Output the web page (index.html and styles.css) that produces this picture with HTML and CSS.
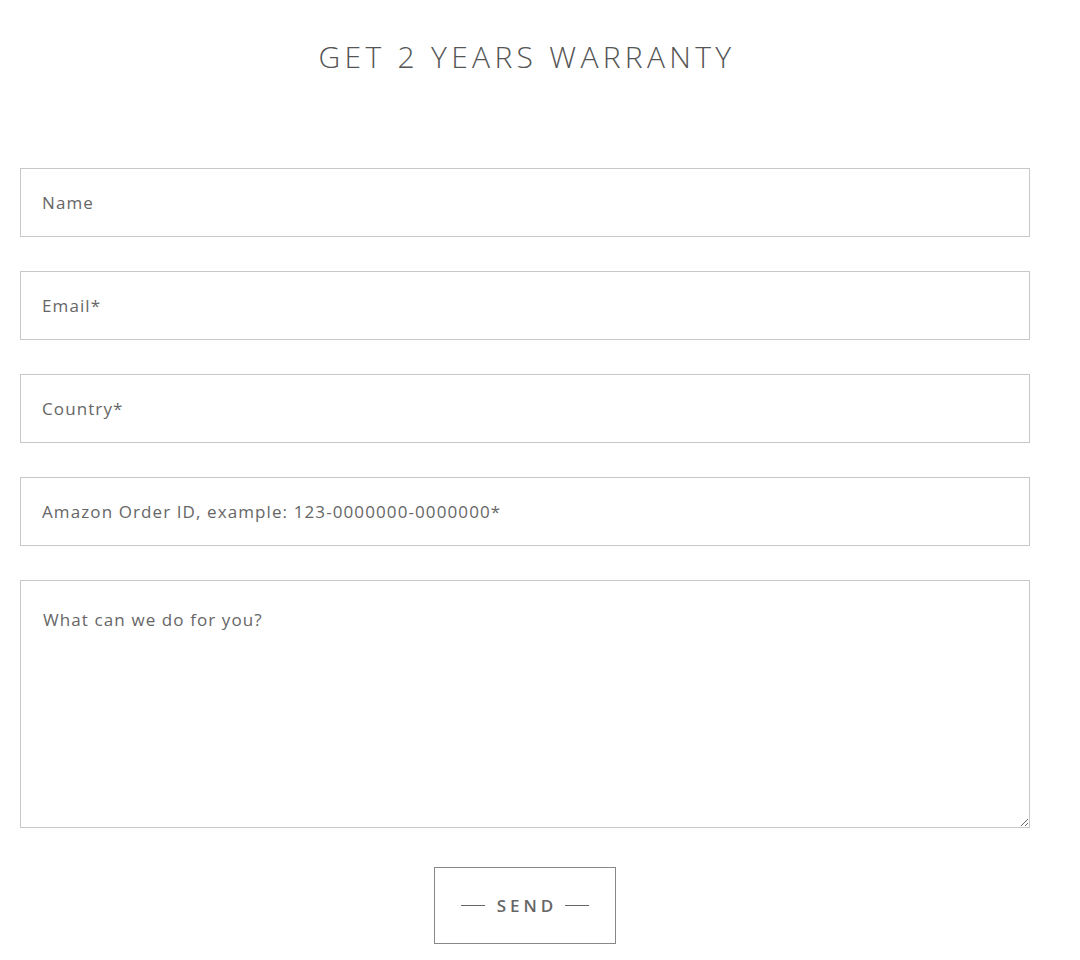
FILE: index.html
```html
<!DOCTYPE html>
<html lang="en">
<head>
<meta charset="utf-8">
<title>Get 2 Years Warranty</title>
<link rel="stylesheet" href="styles.css">
</head>
<body>
<main class="page">
  <h1 class="title">GET 2 YEARS WARRANTY</h1>
  <form class="form">
    <input class="field" type="text" placeholder="Name">
    <input class="field" type="email" placeholder="Email*">
    <input class="field" type="text" placeholder="Country*">
    <input class="field" type="text" placeholder="Amazon Order ID, example: 123-0000000-0000000*">
    <textarea class="field area" placeholder="What can we do for you?"></textarea>
    <div class="actions">
      <button class="send" type="button"><span class="dash"></span><span class="label">SEND</span><span class="dash"></span></button>
    </div>
  </form>
</main>
</body>
</html>
```
FILE: styles.css
```css
html, body {
  margin: 0;
  padding: 0;
  background: #fff;
}
body {
  font-family: "Open Sans", "Noto Sans", sans-serif;
  color: #555;
}
.page {
  width: 1010px;
  margin-left: 20px;
  padding-top: 40px;
}
.title {
  margin: 0 0 0 4px;
  text-align: center;
  font-family: "Open Sans", "Noto Sans", sans-serif;
  font-weight: 300;
  font-size: 30px;
  line-height: 34px;
  letter-spacing: 4.3px;
  color: #555;
}
.form {
  display: flex;
  flex-direction: column;
  gap: 34px;
  margin-top: 94px;
}
.field {
  box-sizing: border-box;
  width: 100%;
  height: 69px;
  margin: 0;
  border: 1px solid #c8c8c8;
  border-radius: 0;
  padding: 0 21px;
  font-family: "Open Sans", "Noto Sans", sans-serif;
  font-size: 17px;
  letter-spacing: 1.1px;
  color: #555;
  background: #fff;
  outline: none;
}
.field::placeholder {
  color: #666;
  opacity: 1;
}
.area {
  height: 248px;
  padding: 27px 22px;
  resize: vertical;
  display: block;
}
.actions {
  display: flex;
  justify-content: center;
  margin-top: 5px;
}
.send {
  box-sizing: border-box;
  width: 182px;
  height: 77px;
  border: 1px solid #888;
  background: #fff;
  display: flex;
  align-items: center;
  justify-content: center;
  gap: 12px;
  padding: 0;
  cursor: pointer;
}
.dash {
  width: 24px;
  height: 1px;
  background: #666;
}
.label {
  font-family: "Open Sans", "Noto Sans", sans-serif;
  font-weight: 600;
  font-size: 17px;
  letter-spacing: 4px;
  margin-right: -4px;
  color: #666;
}
```
